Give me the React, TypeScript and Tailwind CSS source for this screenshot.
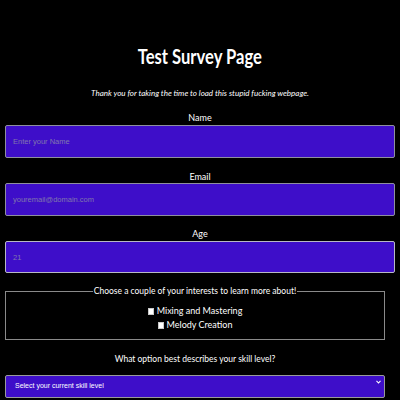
export default function App() {
  return (
    <div className="min-h-screen bg-black px-[5px] font-['Lato',sans-serif] text-white">
      <h1 className="pt-[44px] text-center text-[20px] font-bold leading-[24px]">
        <span className="inline-block scale-x-[0.83]">Test Survey Page</span>
      </h1>
      <p className="mt-[20px] text-center text-[8px] italic leading-[10px]">
        Thank you for taking the time to load this stupid fucking webpage.
      </p>

      <form className="flex flex-col">
        <label htmlFor="name" className="mt-[14px] text-center text-[9px] leading-[12px]">
          Name
        </label>
        <input
          id="name"
          type="text"
          placeholder="Enter your Name"
          className="mt-[1px] h-[33px] w-full rounded-[2px] border border-[#8f8f9e] bg-[#3e0ec9] pl-[7px] font-['Liberation_Sans',sans-serif] text-[7.5px] text-white placeholder:text-[#8077ad]"
        />

        <label htmlFor="email" className="mt-[13px] text-center text-[9px] leading-[12px]">
          Email
        </label>
        <input
          id="email"
          type="email"
          placeholder="youremail@domain.com"
          className="h-[33px] w-full rounded-[2px] border border-[#8f8f9e] bg-[#3e0ec9] pl-[7px] font-['Liberation_Sans',sans-serif] text-[7.5px] text-white placeholder:text-[#8077ad]"
        />

        <label htmlFor="age" className="mt-[12px] text-center text-[9px] leading-[12px]">
          Age
        </label>
        <input
          id="age"
          type="number"
          placeholder="21"
          className="mt-[1px] h-[32px] w-full rounded-[2px] border border-[#b8b8c4] bg-[#3e0ec9] pl-[7px] font-['Liberation_Sans',sans-serif] text-[7.5px] text-white placeholder:text-[#8077ad]"
        />

        <fieldset className="mt-[12px] w-[380px] border border-[#8a8a8a] px-[10px] pb-[7px]">
          <legend className="mx-auto px-[1px] text-[8.5px] leading-[12px]">
            Choose a couple of your interests to learn more about!
          </legend>
          <div className="mt-[7px] flex flex-col items-center text-[9px] leading-[14px]">
            <label className="flex items-center gap-[3px]">
              <input type="checkbox" className="h-[7px] w-[6px] appearance-none border border-[#c8c8c8] bg-white" />
              Mixing and Mastering
            </label>
            <label className="flex items-center gap-[3px]">
              <input type="checkbox" className="h-[7px] w-[6px] appearance-none border border-[#c8c8c8] bg-white" />
              Melody Creation
            </label>
          </div>
        </fieldset>

        <label htmlFor="skill" className="mt-[13px] w-[380px] text-center text-[8.5px] leading-[12px]">
          What option best describes your skill level?
        </label>
        <div className="relative mt-[5px] w-[380px]">
          <select
            id="skill"
            className="h-[23px] w-full appearance-none rounded-[2px] border border-[#9a9a9a] bg-[#3e0ec9] pl-[9px] font-['Liberation_Sans',sans-serif] text-[7px] text-white"
          >
            <option>Select your current skill level</option>
          </select>
          <svg
            className="absolute right-[4px] top-[10px]"
            width="5"
            height="4"
            viewBox="0 0 5 4"
            fill="none"
          >
            <path d="M0.5 0.8 L2.5 3 L4.5 0.8" stroke="white" strokeWidth="1.1" />
          </svg>
        </div>
      </form>
    </div>
  );
}
